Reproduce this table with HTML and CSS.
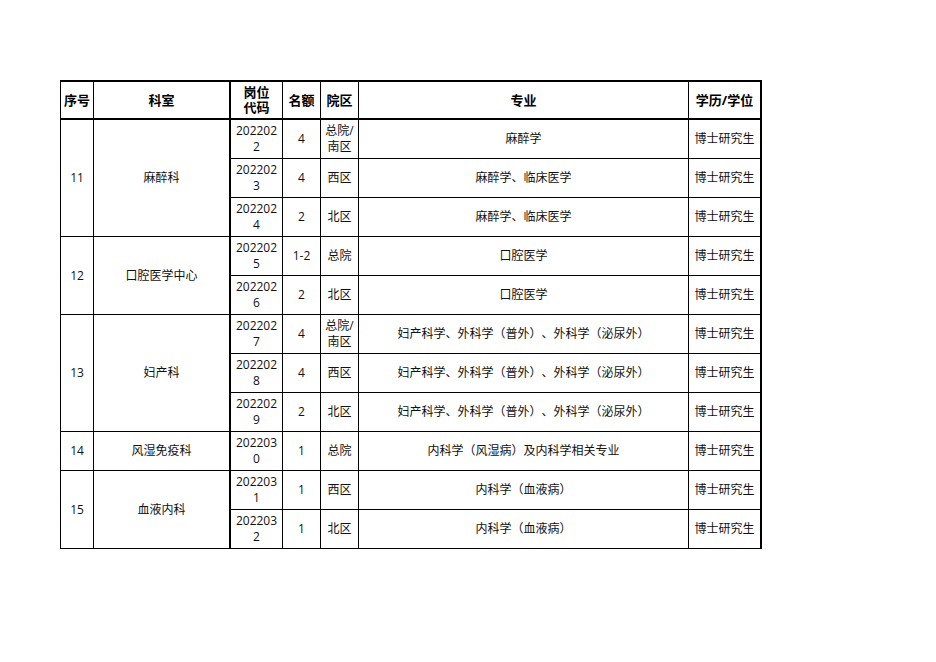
FILE: index.html
```html
<!DOCTYPE html>
<html lang="zh-CN">
<head>
<meta charset="utf-8">
<title>岗位表</title>
<link rel="stylesheet" href="styles.css">
</head>
<body>
<div class="page">
<table class="grid">
  <colgroup>
    <col class="c1"><col class="c2"><col class="c3"><col class="c4"><col class="c5"><col class="c6"><col class="c7">
  </colgroup>
  <thead>
    <tr>
      <th>序号</th><th class="thick">科室</th><th class="narrow">岗位代码</th><th>名额</th><th>院区</th><th>专业</th><th class="last">学历/学位</th>
    </tr>
  </thead>
  <tbody>
    <tr>
      <td rowspan="3">11</td><td rowspan="3" class="thick">麻醉科</td><td class="code">2022022</td><td>4</td><td class="area">总院/南区</td><td>麻醉学</td><td class="last">博士研究生</td>
    </tr>
    <tr>
      <td class="code">2022023</td><td>4</td><td class="area">西区</td><td>麻醉学、临床医学</td><td class="last">博士研究生</td>
    </tr>
    <tr>
      <td class="code">2022024</td><td>2</td><td class="area">北区</td><td>麻醉学、临床医学</td><td class="last">博士研究生</td>
    </tr>
    <tr>
      <td rowspan="2">12</td><td rowspan="2" class="thick">口腔医学中心</td><td class="code">2022025</td><td>1-2</td><td class="area">总院</td><td>口腔医学</td><td class="last">博士研究生</td>
    </tr>
    <tr>
      <td class="code">2022026</td><td>2</td><td class="area">北区</td><td>口腔医学</td><td class="last">博士研究生</td>
    </tr>
    <tr>
      <td rowspan="3">13</td><td rowspan="3" class="thick">妇产科</td><td class="code">2022027</td><td>4</td><td class="area">总院/南区</td><td>妇产科学、外科学（普外）、外科学（泌尿外）</td><td class="last">博士研究生</td>
    </tr>
    <tr>
      <td class="code">2022028</td><td>4</td><td class="area">西区</td><td>妇产科学、外科学（普外）、外科学（泌尿外）</td><td class="last">博士研究生</td>
    </tr>
    <tr>
      <td class="code">2022029</td><td>2</td><td class="area">北区</td><td>妇产科学、外科学（普外）、外科学（泌尿外）</td><td class="last">博士研究生</td>
    </tr>
    <tr>
      <td>14</td><td class="thick">风湿免疫科</td><td class="code">2022030</td><td>1</td><td class="area">总院</td><td>内科学（风湿病）及内科学相关专业</td><td class="last">博士研究生</td>
    </tr>
    <tr>
      <td rowspan="2">15</td><td rowspan="2" class="thick">血液内科</td><td class="code">2022031</td><td>1</td><td class="area">西区</td><td>内科学（血液病）</td><td class="last">博士研究生</td>
    </tr>
    <tr>
      <td class="code">2022032</td><td>1</td><td class="area">北区</td><td>内科学（血液病）</td><td class="last">博士研究生</td>
    </tr>
  </tbody>
</table>
</div>
</body>
</html>
```
FILE: styles.css
```css
html, body {
  margin: 0;
  padding: 0;
  background: #ffffff;
}
.page {
  padding: 80px 0 0 60px;
}
.grid {
  border-collapse: separate;
  border-spacing: 0;
  table-layout: fixed;
  width: 702px;
  border-top: 2px solid #000;
  border-left: 1px solid #000;
  font-family: "Open Sans", "Noto Sans CJK SC", sans-serif;
  font-size: 12px;
  line-height: 16px;
  color: #111;
  text-spacing-trim: space-all;
  font-feature-settings: "halt" 0, "chws" 0;
}
.c1 { width: 33px; }
.c2 { width: 137px; }
.c3 { width: 52px; }
.c4 { width: 38px; }
.c5 { width: 38px; }
.c6 { width: 330px; }
.c7 { width: 73px; }
.grid th,
.grid td {
  box-sizing: border-box;
  border-right: 1px solid #000;
  border-bottom: 1px solid #000;
  padding: 0 4px;
  text-align: center;
  vertical-align: middle;
  height: 39px;
  overflow: hidden;
}
.grid th {
  font-weight: bold;
  font-size: 13px;
  line-height: 15px;
  color: #000;
  height: 38px;
  border-bottom: 2px solid #000;
  padding: 0 2px;
}
.grid .narrow {
  padding: 0 10px;
}
.grid .thick {
  border-right: 2px solid #000;
}
.grid .last {
  border-right: 2px solid #000;
  padding: 0 2px;
}
.grid .code {
  word-break: break-all;
}
.grid .area {
  padding: 0 3px;
}
```
